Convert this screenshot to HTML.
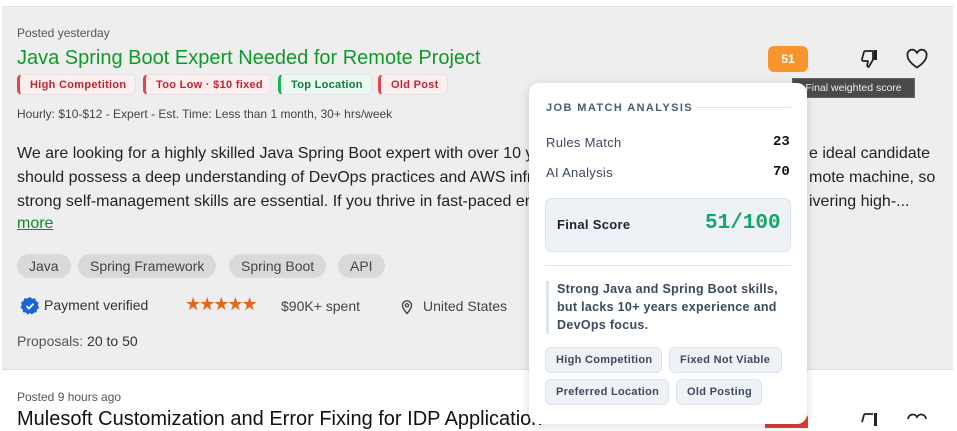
<!DOCTYPE html>
<html><head><meta charset="utf-8"><style>
*{margin:0;padding:0;box-sizing:border-box}
body{width:957px;height:426px;overflow:hidden;background:#fff;font-family:"Liberation Sans",Arial,sans-serif;position:relative;color:#222}
.a{position:absolute;white-space:nowrap}
.card{position:absolute;left:2px;top:6px;width:951px;height:364px;background:#eeeeee;border-top:1px solid #e2e2e2;border-bottom:1px solid #ddd}
.badge{position:absolute;top:74px;height:21px;border-radius:5px;font-size:11px;font-weight:bold;letter-spacing:.3px;line-height:20px;padding:0 0 0 10px;border:1px solid #e4e4e8}
.red{background:#fdeeee;color:#c3232d;border-left:3px solid #e8434b}
.grn{background:#eafaf0;color:#127a3e;border-left:3px solid #18b457}
.desc{font-size:16px;color:#222;line-height:24px}
.skill{position:absolute;top:254px;height:24px;border-radius:12px;background:#d9d9d9;color:#444;font-size:14px;line-height:24px;padding:0 12px}
.pop{position:absolute;left:529px;top:83px;width:278px;height:341px;background:#fff;border-radius:10px;box-shadow:0 2px 10px rgba(0,0,0,.15)}
.chip{position:absolute;height:26px;border-radius:6px;background:#eef2f7;border:1px solid #dbe2ec;color:#3c4a5e;font-size:11px;font-weight:bold;letter-spacing:.3px;line-height:24px;padding:0 0 0 10px}
</style></head><body>
<div class="card"></div>
<div class="a" style="left:17px;top:26px;font-size:12px;color:#555">Posted yesterday</div>
<div class="a" style="left:17px;top:47px;font-size:20px;color:#0e9a29">Java Spring Boot Expert Needed for Remote Project</div>
<div class="badge red" style="left:17px;width:119px">High Competition</div>
<div class="badge red" style="left:143px;width:128px">Too Low · $10 fixed</div>
<div class="badge grn" style="left:278px;width:94px">Top Location</div>
<div class="badge red" style="left:378px;width:70px">Old Post</div>
<div class="a" style="left:17px;top:107px;font-size:12px;color:#444">Hourly: $10-$12 - Expert - Est. Time: Less than 1 month, 30+ hrs/week</div>
<div class="a desc" style="left:17px;top:142px;width:515px;overflow:hidden">We are looking for a highly skilled Java Spring Boot expert with over 10 years<br>should possess a deep understanding of DevOps practices and AWS infrastructure<br>strong self-management skills are essential. If you thrive in fast-paced environments</div>
<div class="a desc" style="left:809px;top:142px">e ideal candidate<br>mote machine, so<br>ivering high-...</div>
<div class="a" style="left:17px;top:215px;font-size:16px;color:#0e8a26;text-decoration:underline">more</div>
<div class="skill" style="left:17px">Java</div>
<div class="skill" style="left:78px">Spring Framework</div>
<div class="skill" style="left:229px">Spring Boot</div>
<div class="skill" style="left:338px">API</div>
<svg class="a" style="left:20px;top:296px" width="20" height="20" viewBox="0 0 20 20"><path d="M10 1l2.3 1.7 2.8-.3.9 2.7 2.5 1.3-.6 2.8 1.2 2.6-2.2 1.8-.4 2.8-2.8.3L12 18.6 10 17l-2.3 1.6-1.8-2.1-2.8-.3-.4-2.8-2.2-1.8 1.2-2.6-.6-2.8 2.5-1.3.9-2.7 2.8.3z" fill="#1b64d8"/><path d="M6.5 10.2l2.4 2.3 4.6-4.7" stroke="#fff" stroke-width="1.8" fill="none"/></svg>
<div class="a" style="left:44px;top:297px;font-size:14px;color:#333">Payment verified</div>
<div class="a" style="left:185px;top:294px;font-size:18px;color:#e2661b;letter-spacing:-2px">★★★★★</div>
<div class="a" style="left:281px;top:298px;font-size:14px;color:#444">$90K+ spent</div>
<svg class="a" style="left:400px;top:299px" width="14" height="16" viewBox="0 0 14 16"><path d="M7 14.5S2.5 9.8 2.5 6.3a4.5 4.5 0 0 1 9 0C11.5 9.8 7 14.5 7 14.5z" fill="none" stroke="#444" stroke-width="1.4"/><circle cx="7" cy="6.3" r="1.6" fill="none" stroke="#444" stroke-width="1.3"/></svg>
<div class="a" style="left:423px;top:298px;font-size:14px;color:#444">United States</div>
<div class="a" style="left:17px;top:333px;font-size:14px;color:#555">Proposals: <span style="color:#333">20 to 50</span></div>
<div class="a" style="left:17px;top:390px;font-size:12px;color:#555">Posted 9 hours ago</div>
<div class="a" style="left:17px;top:408px;font-size:20px;color:#111">Mulesoft Customization and Error Fixing for IDP Application</div>
<div class="a" style="left:765px;top:414px;width:43px;height:14px;background:#e63a36;border-radius:4px 4px 0 0"></div>
<div class="a" style="left:768px;top:46px;width:40px;height:26px;background:#f7952c;border-radius:6px;color:#fff;font-size:12px;font-weight:bold;text-align:center;line-height:26px">51</div>
<svg class="a" style="left:857px;top:47px" width="24" height="24" viewBox="0 0 24 24"><path d="M16 4H8.5c-.8 0-1.4.5-1.6 1.2L5 12.2c-.3 1 .5 1.8 1.4 1.8H11l-.8 4c-.2 1 .5 2 1.5 2l4.3-7.3V4z" fill="none" stroke="#222" stroke-width="1.8" stroke-linejoin="round"/><rect x="17" y="3" width="3" height="10" fill="#222"/></svg>
<svg class="a" style="left:905px;top:48px" width="24" height="22" viewBox="0 0 24 22"><path d="M12 19.5S2.5 13.8 2.5 7.6A4.8 4.8 0 0 1 12 5.5a4.8 4.8 0 0 1 9.5 2.1c0 6.2-9.5 11.9-9.5 11.9z" fill="none" stroke="#222" stroke-width="1.8"/></svg>
<svg class="a" style="left:857px;top:410px" width="24" height="16" viewBox="0 0 24 16"><path d="M16 4H8.5c-.8 0-1.4.5-1.6 1.2L5 12.2" fill="none" stroke="#222" stroke-width="1.8"/><rect x="17" y="3" width="3" height="13" fill="#222"/></svg>
<svg class="a" style="left:905px;top:411px" width="24" height="15" viewBox="0 0 24 15"><path d="M3 8A4.8 4.8 0 0 1 12 6a4.8 4.8 0 0 1 9 2" fill="none" stroke="#222" stroke-width="1.8"/></svg>
<div class="a" style="left:792px;top:78px;width:123px;height:20px;background:#4a4a4c;border:1px solid #666;color:#eee;font-size:10.5px;line-height:18px;text-align:center">Final weighted score</div>
<div class="pop">
 <div class="a" style="left:17px;top:19px;font-size:11px;font-weight:bold;letter-spacing:1.4px;color:#4b5a72">JOB MATCH ANALYSIS</div>
 <div class="a" style="left:166px;top:24px;width:96px;height:1px;background:#dde3ec"></div>
 <div class="a" style="left:17px;top:52px;font-size:13px;color:#3c4a5e;letter-spacing:.3px">Rules Match</div>
 <div class="a" style="left:244px;top:51px;font-size:14px;font-weight:bold;font-family:'Liberation Mono',monospace;color:#111">23</div>
 <div class="a" style="left:17px;top:82px;font-size:13px;color:#3c4a5e;letter-spacing:.3px">AI Analysis</div>
 <div class="a" style="left:244px;top:81px;font-size:14px;font-weight:bold;font-family:'Liberation Mono',monospace;color:#111">70</div>
 <div class="a" style="left:16px;top:115px;width:246px;height:54px;background:#eef2f7;border:1px solid #dbe2ec;border-radius:6px"></div>
 <div class="a" style="left:28px;top:134px;font-size:13px;font-weight:bold;color:#1b2230;letter-spacing:.3px">Final Score</div>
 <div class="a" style="left:176px;top:129px;font-size:21px;font-weight:bold;font-family:'Liberation Mono',monospace;color:#13a66b">51/100</div>
 <div class="a" style="left:16px;top:182px;width:246px;height:1px;background:#dde3ec"></div>
 <div class="a" style="left:17px;top:198px;width:3px;height:53px;background:#dde3ec"></div>
 <div class="a" style="left:28px;top:197px;font-size:12.5px;font-weight:bold;color:#3c4a5e;line-height:18px;letter-spacing:.3px">Strong Java and Spring Boot skills,<br>but lacks 10+ years experience and<br>DevOps focus.</div>
 <div class="chip" style="left:16px;top:264px;width:117px">High Competition</div>
 <div class="chip" style="left:140px;top:264px;width:113px">Fixed Not Viable</div>
 <div class="chip" style="left:16px;top:296px;width:124px">Preferred Location</div>
 <div class="chip" style="left:147px;top:296px;width:86px">Old Posting</div>
</div>
</body></html>
